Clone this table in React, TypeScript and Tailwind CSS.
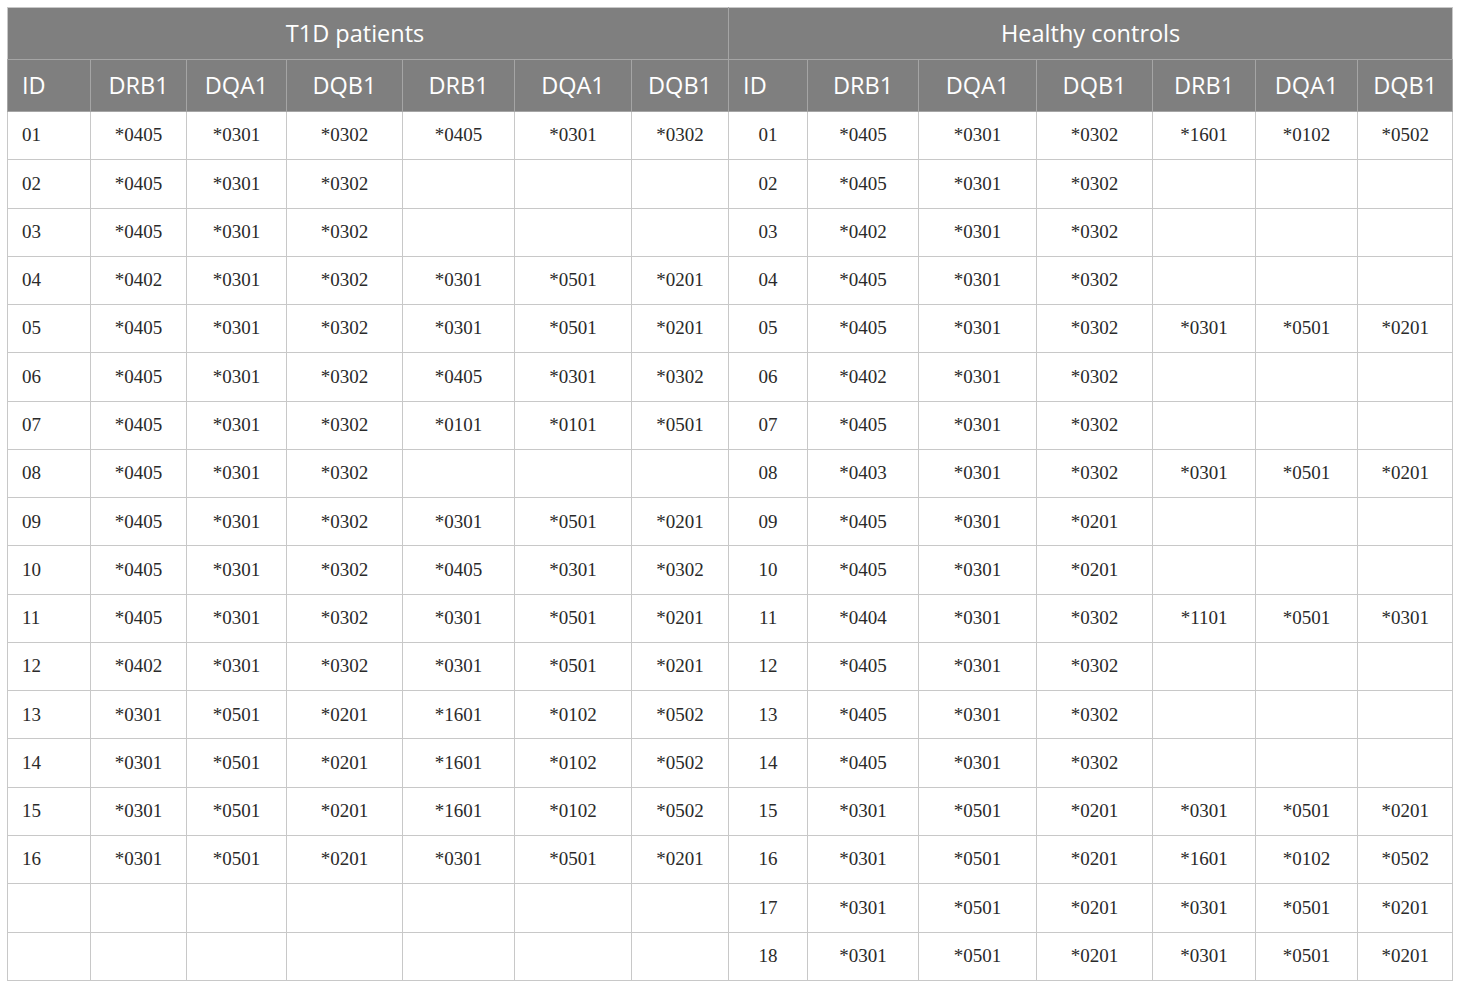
import React from "react";

const widths = [83, 96, 100, 116, 112, 117, 97, 79, 111, 118, 116, 103, 102, 95];

const t1d: string[][] = [
  ["01", "*0405", "*0301", "*0302", "*0405", "*0301", "*0302"],
  ["02", "*0405", "*0301", "*0302", "", "", ""],
  ["03", "*0405", "*0301", "*0302", "", "", ""],
  ["04", "*0402", "*0301", "*0302", "*0301", "*0501", "*0201"],
  ["05", "*0405", "*0301", "*0302", "*0301", "*0501", "*0201"],
  ["06", "*0405", "*0301", "*0302", "*0405", "*0301", "*0302"],
  ["07", "*0405", "*0301", "*0302", "*0101", "*0101", "*0501"],
  ["08", "*0405", "*0301", "*0302", "", "", ""],
  ["09", "*0405", "*0301", "*0302", "*0301", "*0501", "*0201"],
  ["10", "*0405", "*0301", "*0302", "*0405", "*0301", "*0302"],
  ["11", "*0405", "*0301", "*0302", "*0301", "*0501", "*0201"],
  ["12", "*0402", "*0301", "*0302", "*0301", "*0501", "*0201"],
  ["13", "*0301", "*0501", "*0201", "*1601", "*0102", "*0502"],
  ["14", "*0301", "*0501", "*0201", "*1601", "*0102", "*0502"],
  ["15", "*0301", "*0501", "*0201", "*1601", "*0102", "*0502"],
  ["16", "*0301", "*0501", "*0201", "*0301", "*0501", "*0201"],
  ["", "", "", "", "", "", ""],
  ["", "", "", "", "", "", ""],
];

const hc: string[][] = [
  ["01", "*0405", "*0301", "*0302", "*1601", "*0102", "*0502"],
  ["02", "*0405", "*0301", "*0302", "", "", ""],
  ["03", "*0402", "*0301", "*0302", "", "", ""],
  ["04", "*0405", "*0301", "*0302", "", "", ""],
  ["05", "*0405", "*0301", "*0302", "*0301", "*0501", "*0201"],
  ["06", "*0402", "*0301", "*0302", "", "", ""],
  ["07", "*0405", "*0301", "*0302", "", "", ""],
  ["08", "*0403", "*0301", "*0302", "*0301", "*0501", "*0201"],
  ["09", "*0405", "*0301", "*0201", "", "", ""],
  ["10", "*0405", "*0301", "*0201", "", "", ""],
  ["11", "*0404", "*0301", "*0302", "*1101", "*0501", "*0301"],
  ["12", "*0405", "*0301", "*0302", "", "", ""],
  ["13", "*0405", "*0301", "*0302", "", "", ""],
  ["14", "*0405", "*0301", "*0302", "", "", ""],
  ["15", "*0301", "*0501", "*0201", "*0301", "*0501", "*0201"],
  ["16", "*0301", "*0501", "*0201", "*1601", "*0102", "*0502"],
  ["17", "*0301", "*0501", "*0201", "*0301", "*0501", "*0201"],
  ["18", "*0301", "*0501", "*0201", "*0301", "*0501", "*0201"],
];

const heads = ["ID", "DRB1", "DQA1", "DQB1", "DRB1", "DQA1", "DQB1"];

export default function App() {
  return (
    <div className="bg-white w-[1460px] h-[988px] pt-[7px] pl-[7px]">
      <table className="border-collapse table-fixed w-[1446px]">
        <colgroup>
          {widths.map((w, i) => (
            <col key={i} style={{ width: w }} />
          ))}
        </colgroup>
        <thead>
          <tr className="h-[52px] bg-[#7f7f7f] text-white text-[23.5px] font-['Open_Sans',sans-serif]">
            <th colSpan={7} className="font-normal border border-[#a5a5a5] border-t-[#c8c8c8] border-l-[#c8c8c8] text-center pr-[26px]">
              T1D patients
            </th>
            <th colSpan={7} className="font-normal border border-[#a5a5a5] border-t-[#c8c8c8] border-r-[#c8c8c8] text-center">
              Healthy controls
            </th>
          </tr>
          <tr className="h-[52px] bg-[#7f7f7f] text-white text-[23.5px] font-['Open_Sans',sans-serif]">
            {[...heads, ...heads].map((h, i) => (
              <th
                key={i}
                className={`font-normal border border-[#a5a5a5] ${i % 7 === 0 ? "text-left pl-[14px]" : "text-center"}`}
              >
                {h}
              </th>
            ))}
          </tr>
        </thead>
        <tbody className="text-[19px] text-[#2a2a2a] font-['Liberation_Serif',serif]">
          {t1d.map((r, ri) => (
            <tr key={ri} className="h-[48.28px]">
              {[...r, ...hc[ri]].map((c, ci) => (
                <td
                  key={ci}
                  className={`border border-[#c8c8c8] ${
                    ci === 0 ? "text-left pl-[14px]" : "text-center"
                  }`}
                >
                  {c}
                </td>
              ))}
            </tr>
          ))}
        </tbody>
      </table>
    </div>
  );
}
